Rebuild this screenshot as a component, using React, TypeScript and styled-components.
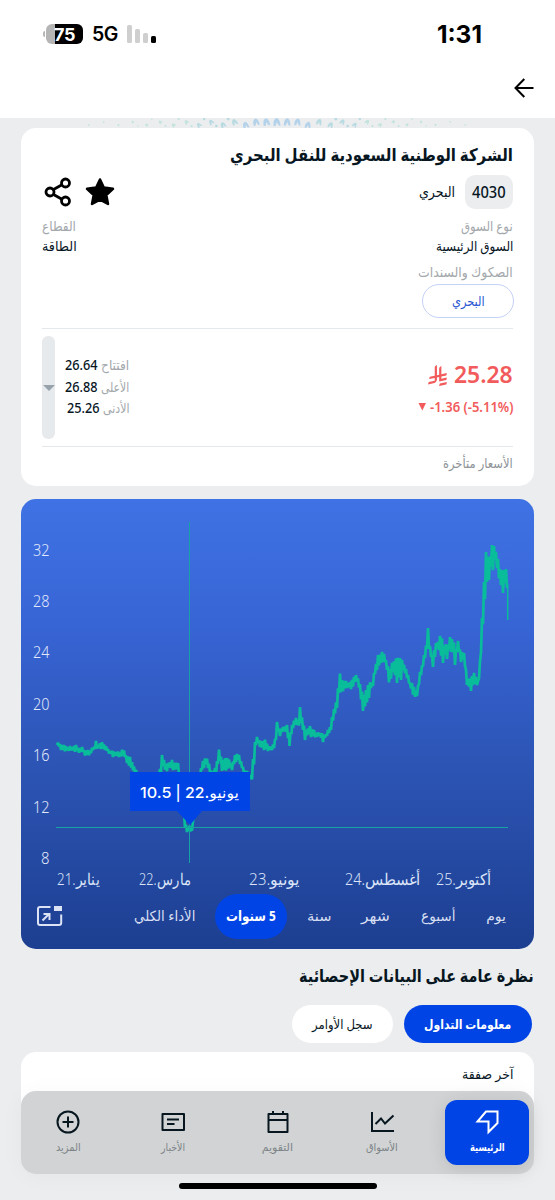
import React, { useLayoutEffect, useRef, useState } from 'react';
import styled, { createGlobalStyle, css } from 'styled-components';

const Global = createGlobalStyle`
  * { box-sizing: border-box; }
  body { margin: 0; background: #ecedef; font-family: "Noto Sans", "DejaVu Sans", sans-serif; color: #07161f; }
`;

const Screen = styled.div`
  position: relative;
  width: 555px;
  height: 1200px;
  overflow: hidden;
  direction: rtl;
  background: #ecedef;
`;

/* ---------- text that is condensed to a given width ---------- */
const FitBox = styled.span<{ $w: number; $size: number; $weight: number; $color: string; $font?: string }>`
  display: block;
  flex: none;
  direction: rtl;
  width: ${p => p.$w}px;
  height: 20px;
  line-height: 20px;
  font-size: ${p => p.$size}px;
  font-weight: ${p => p.$weight};
  color: ${p => p.$color};
  ${p => p.$font && css`font-family: ${p.$font};`}
`;
const FitInner = styled.span`
  display: inline-block;
  white-space: nowrap;
  transform-origin: 100% 50%;
`;
type FitProps = { w: number; size: number; weight?: number; color?: string; font?: string; ltr?: boolean; children: React.ReactNode };
function Fit({ w, size, weight = 400, color = '#07161f', font, ltr, children }: FitProps) {
  const ref = useRef<HTMLSpanElement>(null);
  const [scale, setScale] = useState(1);
  useLayoutEffect(() => {
    if (ref.current) setScale(w / ref.current.offsetWidth);
  }, [w, size]);
  return (
    <FitBox $w={w} $size={size} $weight={weight} $color={color} $font={font}>
      <FitInner ref={ref} dir={ltr ? 'ltr' : 'rtl'} style={{ transform: `scaleX(${scale})` }}>{children}</FitInner>
    </FitBox>
  );
}

/* ---------- header ---------- */
const Header = styled.header`
  height: 118px;
  background: #fff;
`;
const StatusBar = styled.div`
  direction: ltr;
  display: flex;
  align-items: center;
  height: 68px;
  padding: 0 73px 0 43px;
  font-family: Inter, sans-serif;
  color: #000;
`;
const Battery = styled.div`
  display: flex;
  align-items: center;
  justify-content: center;
  width: 37px;
  height: 20px;
  margin-left: 1px;
  border-radius: 6px;
  background: linear-gradient(90deg, #b5b5b5 9px, #000 9px);
  color: #fff;
  font-size: 18px;
  font-weight: 700;
  letter-spacing: -0.3px;
`;
const BatteryTip = styled.i`
  width: 2px;
  height: 6px;
  border-radius: 2px 0 0 2px;
  background: #b5b5b5;
`;
const Network = styled.span`
  margin-left: 9px;
  width: 27px;
  font-size: 19.5px;
  font-weight: 600;
  letter-spacing: -0.6px;
  line-height: 20px;
`;
const Signal = styled.div`
  display: flex;
  align-items: flex-end;
  gap: 3px;
  height: 18px;
  margin-left: 8px;
  i { width: 5px; border-radius: 1.5px; background: #cfcfcf; }
  i:nth-child(1) { height: 18px; }
  i:nth-child(2) { height: 14px; }
  i:nth-child(3) { height: 10px; }
  i:nth-child(4) { height: 7px; background: #000; }
`;
const Clock = styled.span`
  margin-left: auto;
  font-size: 24.5px;
  font-weight: 700;
  line-height: 24px;
  letter-spacing: 0;
`;
const NavRow = styled.div`
  display: flex;
  align-items: center;
  height: 40px;
  padding: 0 21px;
`;
const Pattern = styled.svg`
  display: block;
  width: 555px;
  height: 10px;
`;

/* ---------- cards ---------- */
const Card = styled.section`
  margin: 0 21px;
  background: #fff;
  border-radius: 15px;
`;
const QuoteCard = styled(Card)`
  height: 358px;
  padding: 16px 21px 0 21px;
`;
const Row = styled.div<{ $h: number }>`
  display: flex;
  align-items: center;
  height: ${p => p.$h}px;
`;
const Spread = styled(Row)`
  justify-content: space-between;
`;
const Code = styled.span`
  display: flex;
  align-items: center;
  justify-content: center;
  width: 48px;
  height: 34px;
  margin-left: 10px;
  border-radius: 10px;
  background: #ecedef;
`;
const Actions = styled.div`
  display: flex;
  align-items: center;
  gap: 13px;
  margin-right: auto;
  margin-left: 2px;
`;
const Outline = styled.div`
  display: flex;
  align-items: center;
  justify-content: center;
  width: 92.5px;
  height: 34px;
  margin-right: -1px;
  border: 1.5px solid #c5d2f7;
  border-radius: 17px;
`;
const Rule = styled.hr`
  height: 1px;
  margin: 0;
  border: 0;
  background: #e5e8ea;
`;
const PriceRow = styled.div`
  display: flex;
  height: 117px;
  padding: 7px 0;
`;
const PriceCol = styled.div`
  padding-top: 29px;
  display: flex;
  flex-direction: column;
  gap: 12px;
`;
const PriceLine = styled.div<{ $gap: number }>`
  display: flex;
  direction: ltr;
  justify-content: flex-end;
  align-items: center;
  gap: ${p => p.$gap}px;
  height: 20px;
`;
const Stats = styled.div`
  display: flex;
  flex-direction: column;
  gap: 1.5px;
  margin-right: auto;
  padding-top: 19px;
  width: 64px;
`;
const StatLine = styled.div`
  display: flex;
  gap: 3px;
  align-items: center;
`;
const RangeBar = styled.div`
  display: flex;
  justify-content: center;
  align-items: center;
  width: 13px;
  height: 103px;
  margin-right: 10px;
  border-radius: 6px;
  background: #e7eaec;
`;
const Delayed = styled.div`
  padding-top: 6px;
`;

/* ---------- chart ---------- */
const ChartCard = styled.section`
  margin: 13px 21px 0;
  height: 450px;
  border-radius: 15px;
  overflow: hidden;
  background: linear-gradient(180deg, #3f72e4 0%, #3865d6 27%, #2c54b4 60%, #1d3f91 100%);
`;
const Plot = styled.svg`
  display: block;
  width: 513px;
  height: 395px;
`;
const Periods = styled.div`
  display: flex;
  align-items: center;
  height: 44px;
  padding: 0 28px 0 15px;
`;
const Period = styled.div<{ $gap: number }>`
  margin-right: ${p => p.$gap}px;
`;
const ActivePeriod = styled.div`
  display: flex;
  align-items: center;
  justify-content: center;
  width: 72px;
  height: 45px;
  margin-right: 20px;
  border-radius: 23px;
  background: #0044e6;
`;
const Expand = styled.svg`
  margin-right: auto;
  display: block;
`;

/* ---------- statistics ---------- */
const Heading = styled.div`
  display: flex;
  align-items: center;
  height: 56px;
  padding: 0 21px 4px;
`;
const Tabs = styled.div`
  display: flex;
  gap: 11px;
  padding: 0 23px;
`;
const Tab = styled.div<{ $w: number; $active?: boolean }>`
  display: flex;
  align-items: center;
  justify-content: center;
  width: ${p => p.$w}px;
  height: 38px;
  border-radius: 19px;
  background: ${p => (p.$active ? '#0044e6' : '#fff')};
`;
const LastDeal = styled(Card)`
  height: 120px;
  margin-top: 9px;
  padding: 12px 21px;
`;

/* ---------- bottom navigation ---------- */
const TabBar = styled.nav`
  position: absolute;
  left: 21px;
  right: 21px;
  top: 1091px;
  height: 83px;
  display: flex;
  align-items: center;
  justify-content: space-between;
  padding: 0 5px;
  border-radius: 15px;
  background: #d1d3d4;
  box-shadow: 0 2px 24px rgba(0, 0, 0, 0.035);
`;
const NavItem = styled.div<{ $active?: boolean }>`
  display: flex;
  flex: none;
  flex-direction: column;
  align-items: center;
  gap: 1px;
  width: 84px;
  height: 65px;
  padding-top: 8px;
  border-radius: 12px;
  ${p => p.$active && css`
    background: #0044e6;
    box-shadow: 0 3px 18px rgba(0, 0, 0, 0.12);
  `}
  svg { display: block; }
`;
const HomeIndicator = styled.div`
  position: absolute;
  left: 179px;
  top: 1183px;
  width: 198px;
  height: 6px;
  border-radius: 3px;
  background: #000;
`;

/* price envelope: x, upper edge, lower edge */
const envelope: number[][] = [
  [57, 741, 746], [60, 743, 751], [64, 744, 754], [70, 745, 753], [76, 744, 754], [82, 746, 754], [88, 749, 760],
  [92, 747, 754], [96, 740, 750], [98, 744, 751], [101, 740, 750], [105, 743, 751], [108, 748, 755], [113, 750, 758],
  [119, 750, 758], [123, 747, 757], [127, 752, 764], [130, 756, 769], [135, 766, 775], [140, 775, 785], [155, 772, 780],
  [160, 768, 778], [162, 754, 770], [166, 763, 773], [172, 759, 771], [178, 762, 775], [181, 775, 790], [185, 820, 829],
  [187.500, 828, 834], [189.500, 825, 830], [191, 828, 834], [193, 820, 829], [196, 785, 800], [200, 770, 780],
  [204, 755, 769], [208, 758, 769], [212, 770, 778], [216, 766, 776], [218, 745, 765], [222, 754, 772], [227, 757, 773],
  [232, 760, 771], [236, 752, 763], [240, 754, 765], [243, 766, 775], [247, 770, 776], [251, 774, 784], [253, 758, 782],
  [255, 741, 752], [257, 736, 745], [261, 740, 750], [264, 733, 751], [268, 743, 752], [272, 745, 751], [275, 738, 749],
  [277, 721, 735], [280, 725, 737], [283, 726, 735], [287, 724, 735], [289.500, 732, 747], [292, 724, 736],
  [295, 715, 726], [298, 719, 728], [300, 706, 727], [303, 717, 731], [305, 727, 741], [310, 725, 738], [314, 729, 739],
  [320, 732, 738], [323, 732, 743], [328, 729, 739], [331, 720, 731], [334, 708, 722], [337, 692, 709], [339, 669, 694],
  [342, 679, 694], [346, 680, 688], [350, 681, 692], [354, 676, 687], [357, 672, 682], [360, 683, 699], [363, 686, 712],
  [366, 689, 710], [369, 681, 699], [373, 677, 687], [377, 655, 671], [381, 649, 664], [385, 653, 663],
  [388, 665, 678], [390, 668, 696], [393, 658, 673], [397, 657, 684], [401, 656, 681], [405, 660, 674],
  [408, 674, 684], [412, 682, 696], [414, 686, 702], [417, 690, 697], [420, 671, 682], [424, 654, 666],
  [428, 627, 652], [430, 645, 660], [433, 649, 668], [436, 642, 657], [439, 631, 651], [443, 635, 664],
  [447, 637, 660], [451, 634, 653], [455, 643, 666], [458, 640, 653], [461, 647, 663], [464, 652, 662],
  [467, 674, 686], [471, 673, 692], [475, 670, 685], [478, 680, 688], [480, 660, 680], [482, 617, 640],
  [484, 581, 618], [486, 551, 607], [489, 556, 581], [492, 544, 577], [495, 544, 560], [498, 558, 574],
  [500, 568, 596], [503, 567, 594], [506, 568, 593], [507.5, 584, 592],
];

function buildPrice(): string {
  const out: string[] = [];
  let flip = false;
  let seed = 7;
  const rand = () => {
    seed = (seed * 16807) % 2147483647;
    return seed / 2147483647;
  };
  for (let i = 0; i < envelope.length - 1; i++) {
    const [x0, a0, b0] = envelope[i];
    const [x1, a1, b1] = envelope[i + 1];
    for (let x = x0; x < x1; x += 1) {
      const t = (x - x0) / (x1 - x0);
      const top = a0 + (a1 - a0) * t + 1;
      const bottom = b0 + (b1 - b0) * t - 1;
      const k = x === x0 ? 0 : rand() * 0.4;
      const y = flip ? top + (bottom - top) * k : bottom - (bottom - top) * k;
      flip = !flip;
      out.push(`${x.toFixed(1)},${y.toFixed(1)}`);
    }
  }
  return out.join(' ');
}
const price = buildPrice();

const yTicks = [32, 28, 24, 20, 16, 12, 8];
const xTicks: [string, number, number][] = [
  ['يناير.21', 57, 42], ['مارس.22', 139, 52], ['يونيو.23', 249, 50], ['أغسطس.24', 345, 75], ['أكتوبر.25', 436, 55],
];

const dots = Array.from({ length: 31 }, (_, i) => i - 15);
const GREY = '#a3a8ac';
const PALE = '#d7dff2';
const RED = '#f25b5b';
const INK = '#07161f';

function Chart() {
  return (
    <Plot viewBox="21 499 513 395" direction="ltr">
      <g fill="#e2e9fa" fontSize="16" fontFamily='"Noto Sans"' fontWeight="300" textAnchor="end">
        {yTicks.map((v, i) => <text key={v} x="49.5" y={555.5 + i * 51.4} textLength={v > 8 ? 16.5 : 8.5} lengthAdjust="spacingAndGlyphs">{v}</text>)}
      </g>
      <polyline points={price} fill="none" stroke="#09bd9a" strokeWidth="2.700" strokeLinejoin="bevel" />
      <path d="M507.700 584V620" stroke="#09bd9a" strokeWidth="1.500" />
      <path d="M189.500 522V863M56 827.500H508" stroke="#17a2a3" strokeWidth="1" fill="none" />
      <path d="M130 772H250V811H202L190 825L177 811H130Z" fill="#0044e6" />
      <g fontSize="15" fontWeight="500" fill="#fff" fontFamily='Inter, "Noto Sans", "DejaVu Sans"'>
        <text x="140" y="797.500" textLength="31.500" lengthAdjust="spacingAndGlyphs">10.5</text>
        <text x="175.500" y="797.500">|</text>
        <text x="185" y="797.500" textLength="54" lengthAdjust="spacingAndGlyphs" textAnchor="end" style={{ direction: 'rtl' }}>يونيو.22</text>
      </g>
      <g fill="#dbe4f8" fontSize="15.500" fontFamily='"Noto Sans", "DejaVu Sans"' fontWeight="300">
        {xTicks.map(([t, x, w]) => (
          <text key={t} x={x} y="885" textLength={w} lengthAdjust="spacingAndGlyphs" textAnchor="end" style={{ direction: 'rtl' }}>{t}</text>
        ))}
      </g>
    </Plot>
  );
}

export default function App() {
  return (
    <Screen>
      <Global />
      <Header>
        <StatusBar>
          <BatteryTip />
          <Battery>75</Battery>
          <Network>5G</Network>
          <Signal><i /><i /><i /><i /></Signal>
          <Clock>1:31</Clock>
        </StatusBar>
        <NavRow>
          <svg width="20" height="20" viewBox="0 0 20 20" fill="none" stroke="#000" strokeWidth="2">
            <path d="M19.500 10H1.500M10.300 1L1.500 10L10.300 19" />
          </svg>
        </NavRow>
      </Header>
      <Pattern viewBox="0 118 555 10">
        {dots.map(i => {
          const a = Math.abs(i);
          const x = 277 + i * (a < 4 ? 10.4 : 10.4 + (a - 3) * 0.18);
          const s = Math.max(0.25, 1 - a * 0.055);
          const color = a < 4 ? '#b4d3ea' : a < 8 ? '#b8dbe2' : '#bfe3dc';
          return (
            <g key={i} fill={color}>
              <path d="M-3.500 4V0Q-2.500 -4 0 -4Q3 -3 3.500 4L1.200 3L0 0L-1.500 4Z" transform={`translate(${x} ${122 + (a > 2 ? (a % 2) * 3 : 0)}) rotate(${i * 5}) scale(${s})`} />
              {a > 4 && a < 13 && <circle cx={x + 5} cy={a % 2 ? 119 : 126} r={2 * s} />}
            </g>
          );
        })}
      </Pattern>

      <QuoteCard>
        <Row $h={20}><Fit w={283} size={17.5} weight={700}>الشركة الوطنية السعودية للنقل البحري</Fit></Row>
        <Row $h={56}>
          <Code><Fit w={34} size={16} weight={500}>4030</Fit></Code>
          <Fit w={36} size={14}>البحري</Fit>
          <Actions>
            <svg width="30" height="30" viewBox="0 0 30 30">
              <path d="M15 2.500L18.800 10.600L28 11.800L21.300 18L23 27L15 22.600L7 27L8.700 18L2 11.800L11.200 10.600Z" fill="#000" stroke="#000" strokeWidth="2.500" strokeLinejoin="round" />
            </svg>
            <svg width="28" height="30" viewBox="0 0 28 30" fill="none" stroke="#000" strokeWidth="2.800">
              <path d="M9.500 12.500L17.500 8M9.500 17.500L17.500 22" />
              <circle cx="6" cy="15" r="4" /><circle cx="21.500" cy="6" r="4" /><circle cx="21.500" cy="24" r="4" />
            </svg>
          </Actions>
        </Row>
        <Spread $h={12}><Fit w={52} size={13.5} color={GREY}>نوع السوق</Fit><Fit w={34} size={13.5} color={GREY}>القطاع</Fit></Spread>
        <Spread $h={28}><Fit w={77} size={13.5} weight={500}>السوق الرئيسية</Fit><Fit w={35} size={13.5} weight={500}>الطاقة</Fit></Spread>
        <Row $h={24}><Fit w={95} size={13.5} color={GREY}>الصكوك والسندات</Fit></Row>
        <Outline><Fit w={33} size={13.5} color="#2b57d3">البحري</Fit></Outline>
        <Row $h={10} />
        <Rule />
        <PriceRow>
          <PriceCol>
            <PriceLine $gap={7}>
              <svg width="19" height="21" viewBox="0 0 1124.140 1256.390" fill={RED}>
                <path d="M699.620,1113.020c-20.060,44.480-33.320,92.750-38.400,143.370l424.510-90.240c20.060-44.470,33.310-92.750,38.400-143.370l-424.510,90.240Z" />
                <path d="M1085.730,895.800c20.060-44.470,33.320-92.750,38.400-143.370l-330.680,70.330v-135.200l292.270-62.110c20.060-44.470,33.320-92.750,38.400-143.370l-330.680,70.270V66.130c-50.670,28.450-95.670,66.320-132.250,110.990v403.350l-132.250,28.110V0c-50.670,28.440-95.670,66.320-132.250,110.990v525.690l-295.910,62.880c-20.060,44.470-33.330,92.750-38.420,143.370l334.330-71.050v170.260l-358.300,76.140c-20.060,44.470-33.320,92.750-38.400,143.370l375.040-79.700c30.530-6.350,56.770-24.400,73.830-49.240l68.780-101.970v-.020c7.140-10.550,11.300-23.270,11.300-36.970v-149.980l132.250-28.110v270.400l424.530-90.280Z" />
              </svg>
              <Fit w={59} size={22.5} weight={600} color={RED}>25.28</Fit>
            </PriceLine>
            <PriceLine $gap={2}>
              <svg width="9" height="8" viewBox="0 0 9 8"><path d="M0.500 0H8L4.300 7.500Z" fill={RED} /></svg>
              <Fit w={84} size={13.5} weight={600} color={RED} ltr>-1.36 (-5.11%)</Fit>
            </PriceLine>
          </PriceCol>
          <Stats>
            <StatLine><Fit w={28} size={13.5} color={GREY}>افتتاح</Fit><Fit w={33} size={13.5} weight={500}>26.64</Fit></StatLine>
            <StatLine><Fit w={28} size={13.5} color={GREY}>الأعلى</Fit><Fit w={33} size={13.5} weight={500}>26.88</Fit></StatLine>
            <StatLine><Fit w={26} size={13.5} color={GREY}>الأدنى</Fit><Fit w={33} size={13.5} weight={500}>25.26</Fit></StatLine>
          </Stats>
          <RangeBar>
            <svg width="12" height="6" viewBox="0 0 12 6"><path d="M0 0H12L6 6Z" fill="#98a2aa" /></svg>
          </RangeBar>
        </PriceRow>
        <Rule />
        <Delayed><Fit w={70} size={13.5} color="#8d9398">الأسعار متأخرة</Fit></Delayed>
      </QuoteCard>

      <ChartCard>
        <Chart />
        <Periods>
          <Fit w={20} size={14} color={PALE}>يوم</Fit>
          <Period $gap={31}><Fit w={34} size={14} color={PALE}>أسبوع</Fit></Period>
          <Period $gap={31}><Fit w={29} size={14} color={PALE}>شهر</Fit></Period>
          <Period $gap={30}><Fit w={24} size={14} color={PALE}>سنة</Fit></Period>
          <ActivePeriod><Fit w={50} size={14} weight={700} color="#fff">5 سنوات</Fit></ActivePeriod>
          <Period $gap={20}><Fit w={61} size={14} color={PALE}>الأداء الكلي</Fit></Period>
          <Expand width="27" height="22" viewBox="0 0 27 22" fill="none" stroke="#dbe3f5" strokeWidth="2">
            <path d="M14.500 2H4Q2 2 2 4V18Q2 20 4 20H23Q25.200 20 25.200 18V9.500M6.500 15.500L13 9M7.500 9H13.500V15" />
            <path d="M18 1H26V6H18Z" fill="#dbe3f5" stroke="none" />
          </Expand>
        </Periods>
      </ChartCard>

      <Heading><Fit w={235} size={17.5} weight={700}>نظرة عامة على البيانات الإحصائية</Fit></Heading>
      <Tabs>
        <Tab $w={128} $active><Fit w={87} size={13} weight={700} color="#fff">معلومات التداول</Fit></Tab>
        <Tab $w={101}><Fit w={61} size={13}>سجل الأوامر</Fit></Tab>
      </Tabs>
      <LastDeal><Fit w={51} size={13}>آخر صفقة</Fit></LastDeal>

      <TabBar>
        <NavItem $active>
          <svg width="26" height="28" viewBox="0 0 26 28" fill="none" stroke="#fff" strokeWidth="2">
            <path d="M12 3.500H23.500V15L14.500 24V13.500H3.500Z" />
          </svg>
          <Fit w={35} size={11} weight={700} color="#fff">الرئيسية</Fit>
        </NavItem>
        <NavItem>
          <svg width="26" height="28" viewBox="0 0 26 28" fill="none" stroke={INK} strokeWidth="2">
            <path d="M3 4V23H25M6.500 16L12 10.500L16 15.500L24.500 7.500" />
          </svg>
          <Fit w={32} size={11} color="#7d8488">الأسواق</Fit>
        </NavItem>
        <NavItem>
          <svg width="26" height="28" viewBox="0 0 26 28" fill="none" stroke={INK} strokeWidth="2" strokeLinejoin="round">
            <path d="M3.500 6H22.500V24H3.500ZM3.500 12H22.500M8 3V6M18 3V6" />
          </svg>
          <Fit w={31} size={11} color="#7d8488">التقويم</Fit>
        </NavItem>
        <NavItem>
          <svg width="26" height="28" viewBox="0 0 26 28" fill="none" stroke={INK} strokeWidth="2" strokeLinejoin="round">
            <path d="M2.500 6H24V22H2.500ZM7 11.500H19M7 16H14.500" />
          </svg>
          <Fit w={24} size={11} color="#7d8488">الأخبار</Fit>
        </NavItem>
        <NavItem>
          <svg width="26" height="28" viewBox="0 0 26 28" fill="none" stroke={INK} strokeWidth="2">
            <circle cx="13" cy="14" r="10.500" /><path d="M13 8.500V19.500M7.500 14H18.500" />
          </svg>
          <Fit w={25} size={11} color="#7d8488">المزيد</Fit>
        </NavItem>
      </TabBar>
      <HomeIndicator />
    </Screen>
  );
}
